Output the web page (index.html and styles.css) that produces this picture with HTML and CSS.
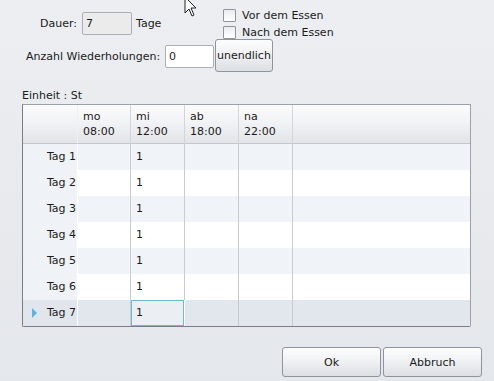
FILE: index.html
```html
<!DOCTYPE html>
<html lang="de">
<head>
    <meta charset="UTF-8">
    <title>Dosierung</title>
    <link rel="stylesheet" href="styles.css">
</head>
<body>
    <div class="dialog">
        <div class="top">
            <div class="dauer">
                <span>Dauer:</span>
                <div class="field disabled">7</div>
                <span>Tage</span>
            </div>
            <div class="checks">
                <label class="check"><span class="box"></span>Vor dem Essen</label>
                <label class="check"><span class="box"></span>Nach dem Essen</label>
            </div>
        </div>
        <div class="repeat">
            <span class="repeat-label">Anzahl Wiederholungen:</span>
            <div class="field count">0</div>
            <button class="btn endless">unendlich</button>
        </div>
        <div class="unit">Einheit : St</div>

        <div class="grid">
            <div class="head corner"></div>
            <div class="head">mo<br>08:00</div>
            <div class="head">mi<br>12:00</div>
            <div class="head">ab<br>18:00</div>
            <div class="head">na<br>22:00</div>
            <div class="head fill"></div>

            <div class="rowhead">Tag 1</div>
            <div class="cell alt"></div><div class="cell alt">1</div><div class="cell alt"></div><div class="cell alt"></div><div class="cell alt fill"></div>

            <div class="rowhead">Tag 2</div>
            <div class="cell"></div><div class="cell">1</div><div class="cell"></div><div class="cell"></div><div class="cell fill"></div>

            <div class="rowhead">Tag 3</div>
            <div class="cell alt"></div><div class="cell alt">1</div><div class="cell alt"></div><div class="cell alt"></div><div class="cell alt fill"></div>

            <div class="rowhead">Tag 4</div>
            <div class="cell"></div><div class="cell">1</div><div class="cell"></div><div class="cell"></div><div class="cell fill"></div>

            <div class="rowhead">Tag 5</div>
            <div class="cell alt"></div><div class="cell alt">1</div><div class="cell alt"></div><div class="cell alt"></div><div class="cell alt fill"></div>

            <div class="rowhead">Tag 6</div>
            <div class="cell"></div><div class="cell">1</div><div class="cell"></div><div class="cell"></div><div class="cell fill"></div>

            <div class="rowhead current"><span class="marker"></span>Tag 7</div>
            <div class="cell sel"></div><div class="cell sel focus">1</div><div class="cell sel"></div><div class="cell sel"></div><div class="cell sel fill"></div>
        </div>

        <div class="actions">
            <button class="btn action">Ok</button>
            <button class="btn action">Abbruch</button>
        </div>
    </div>

    <svg class="cursor" width="14" height="22" viewBox="0 0 14 22">
        <path d="M1 1 L1 17 L5 13 L8 20 L10 19 L7 12 L12 12 Z" fill="#fff" stroke="#222" stroke-width="1"/>
    </svg>
</body>
</html>
```

FILE: styles.css
```css
html, body {
    margin: 0;
    height: 100%;
}
body {
    font-family: "DejaVu Sans", Verdana, sans-serif;
    font-size: 11px;
    color: #1a1a1a;
    background: linear-gradient(to bottom, #eceef1, #e4e7eb);
    position: relative;
    overflow: hidden;
}
.dialog {
    display: flex;
    flex-direction: column;
}
.top {
    display: flex;
    height: 39px;
}
.dauer {
    flex: 0 0 183px;
    margin-left: 40px;
    display: flex;
    align-items: center;
    gap: 5px;
    height: 23px;
    margin-top: 12px;
}
.dauer span:last-child {
    margin-left: -1px;
}
.field {
    box-sizing: border-box;
    border: 1px solid #abb0b6;
    border-radius: 2px;
    padding-left: 3px;
    display: flex;
    align-items: center;
    background: #fff;
}
.field.disabled {
    width: 50px;
    height: 23px;
    background: #ebebeb;
}
.checks {
    display: flex;
    flex-direction: column;
    gap: 4px;
    padding-top: 9px;
}
.check {
    display: flex;
    align-items: center;
    gap: 6px;
    height: 13px;
}
.box {
    box-sizing: border-box;
    width: 13px;
    height: 13px;
    border: 1px solid #8f959c;
    background: linear-gradient(to bottom, #e9ecef, #ffffff);
    border-radius: 1px;
}
.repeat {
    display: flex;
    align-items: center;
    margin-left: 26px;
    height: 33px;
}
.repeat-label {
    flex: 0 0 139px;
    padding-top: 2px;
}
.field.count {
    width: 49px;
    height: 23px;
    margin-top: 1px;
}
.btn {
    font-family: inherit;
    font-size: 11px;
    color: #1a1a1a;
    box-sizing: border-box;
    border: 1px solid #8e959d;
    border-radius: 3px;
    background: linear-gradient(to bottom, #fdfdfd, #eef0f2 50%, #dcdfe3);
    padding: 0;
}
.endless {
    width: 58px;
    height: 33px;
    margin-left: 1px;
}
.unit {
    margin: 16px 0 0 22px;
    line-height: 16px;
}
.grid {
    margin-left: 22px;
    width: 449px;
    box-sizing: border-box;
    display: grid;
    grid-template-columns: 55px 53px 54px 54px 54px 1fr;
    grid-template-rows: 39px repeat(7, 26px);
    border: 1px solid #9ba1a8;
    border-left-color: #777e86;
    border-bottom-color: #777e86;
    border-radius: 0 0 2px 2px;
    background: #fff;
}
.head {
    background: linear-gradient(to bottom, #fbfbfc, #f3f4f6 40%, #e1e4e8);
    border-bottom: 1px solid #c3c7cc;
    border-right: 1px solid #d2d5d9;
    padding: 4px 0 0 5px;
    line-height: 15px;
}
.head.corner {
    border-right-color: #eef0f2;
}
.head.fill {
    border-right: none;
}
.rowhead {
    background: #eff2f6;
    border-right: 1px solid #fff;
    text-align: right;
    padding-right: 1px;
    line-height: 26px;
    position: relative;
}
.rowhead.current {
    background: #e1e6ed;
}
.marker {
    position: absolute;
    left: 9px;
    top: 8px;
    width: 0;
    height: 0;
    border-top: 5px solid transparent;
    border-bottom: 5px solid transparent;
    border-left: 5px solid #5ab5dc;
}
.cell {
    border-right: 1px solid #c9cbcd;
    padding-left: 5px;
    line-height: 26px;
    background: #fff;
}
.cell.alt {
    background: #f0f3f8;
}
.cell.sel {
    background: #e2e7ee;
}
.cell.fill {
    border-right: none;
}
.cell.focus {
    box-sizing: border-box;
    border: 1px solid #6dbccd;
    background: #ebeff3;
    padding-left: 4px;
    line-height: 24px;
    margin-right: 1px;
}
.actions {
    display: flex;
    justify-content: flex-end;
    gap: 2px;
    margin: 20px 12px 0 0;
}
.action {
    width: 99px;
    height: 30px;
}
.cursor {
    position: absolute;
    left: 184px;
    top: -4px;
}
```
